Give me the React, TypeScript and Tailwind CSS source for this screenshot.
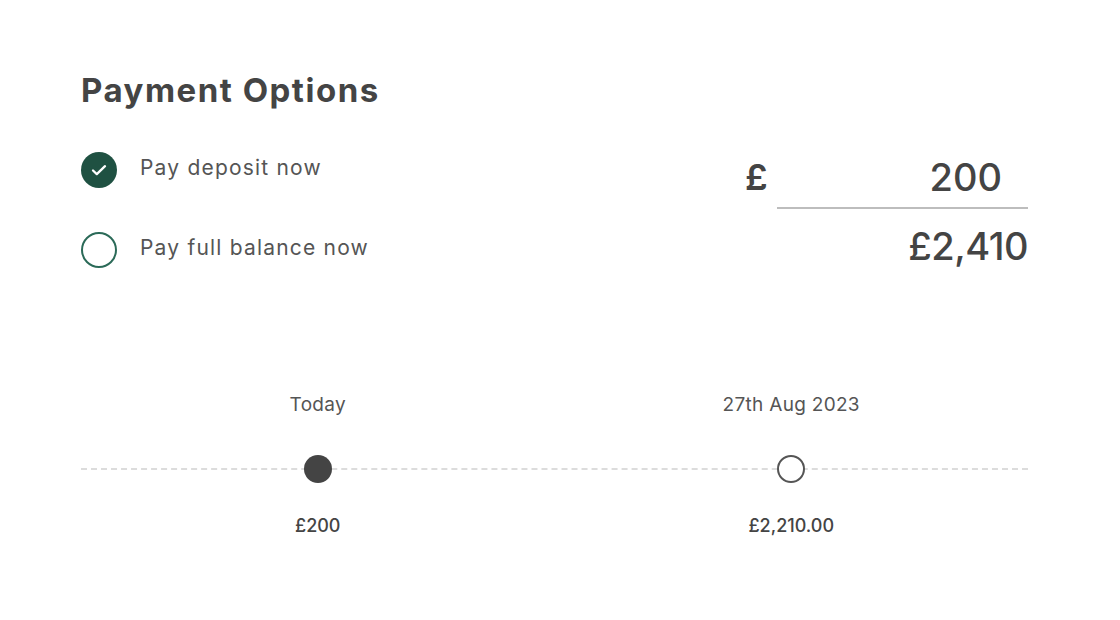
import React from "react";

export default function App() {
  return (
    <div className="w-[1120px] h-[620px] bg-white text-[#464646]" style={{ fontFamily: "Inter, 'Noto Sans', sans-serif" }}>
      <div className="pt-[68px] pl-[81px] pr-[92px]">
        <h1 className="text-[33px] leading-[44px] font-bold text-[#444] tracking-[1.5px]">Payment Options</h1>
        <div className="flex justify-between mt-[16px]">
          <div className="flex flex-col gap-[44px] pt-[24px]">
            <div className="flex items-center gap-[23px]">
              <div className="w-[36px] h-[36px] rounded-full bg-[#1f5142] flex items-center justify-center">
                <svg width="18" height="18" viewBox="0 0 18 18" fill="none">
                  <path d="M3 9.5l3.8 3.6L15 5.2" stroke="white" strokeWidth="2.3" strokeLinecap="round" strokeLinejoin="round" />
                </svg>
              </div>
              <span className="text-[21px] leading-[24px] text-[#555] tracking-[1.2px] -mt-[4px]">Pay deposit now</span>
            </div>
            <div className="flex items-center gap-[23px]">
              <div className="w-[36px] h-[36px] rounded-full border-2 border-[#2b6a58] bg-white" />
              <span className="text-[21px] leading-[24px] text-[#555] tracking-[1.2px] -mt-[4px]">Pay full balance now</span>
            </div>
          </div>
          <div className="flex flex-col items-end w-[283px] mt-[27px]">
            <div className="flex items-end w-full">
              <span className="text-[36px] leading-[44px] font-semibold text-[#444] w-[32px] mb-[10px]">£</span>
              <div className="flex-1 border-b-2 border-[#bdbdbd] flex justify-end pr-[26px] pb-[8px]">
                <span className="text-[38px] leading-[44px] text-[#444] font-medium">200</span>
              </div>
            </div>
            <span className="text-[38px] leading-[44px] text-[#444] font-medium mt-[15px] tracking-[-0.5px]">£2,410</span>
          </div>
        </div>
        <div className="mt-[125px] grid grid-cols-2 relative">
          <div className="absolute left-0 right-0 top-[75px] border-t-2 border-dashed border-[#dcdcdc]" />
          <div className="flex flex-col items-center relative">
            <span className="text-[19px] leading-[24px] text-[#555] tracking-[0.3px]">Today</span>
            <div className="w-[28px] h-[28px] rounded-full bg-[#444] mt-[38px]" />
            <span className="text-[18px] leading-[24px] text-[#444] font-medium mt-[31px]">£200</span>
          </div>
          <div className="flex flex-col items-center relative">
            <span className="text-[19px] leading-[24px] text-[#555] tracking-[0.3px]">27th Aug 2023</span>
            <div className="w-[28px] h-[28px] rounded-full bg-white border-2 border-[#555] mt-[38px]" />
            <span className="text-[18px] leading-[24px] text-[#444] font-medium mt-[31px]">£2,210.00</span>
          </div>
        </div>
      </div>
    </div>
  );
}
